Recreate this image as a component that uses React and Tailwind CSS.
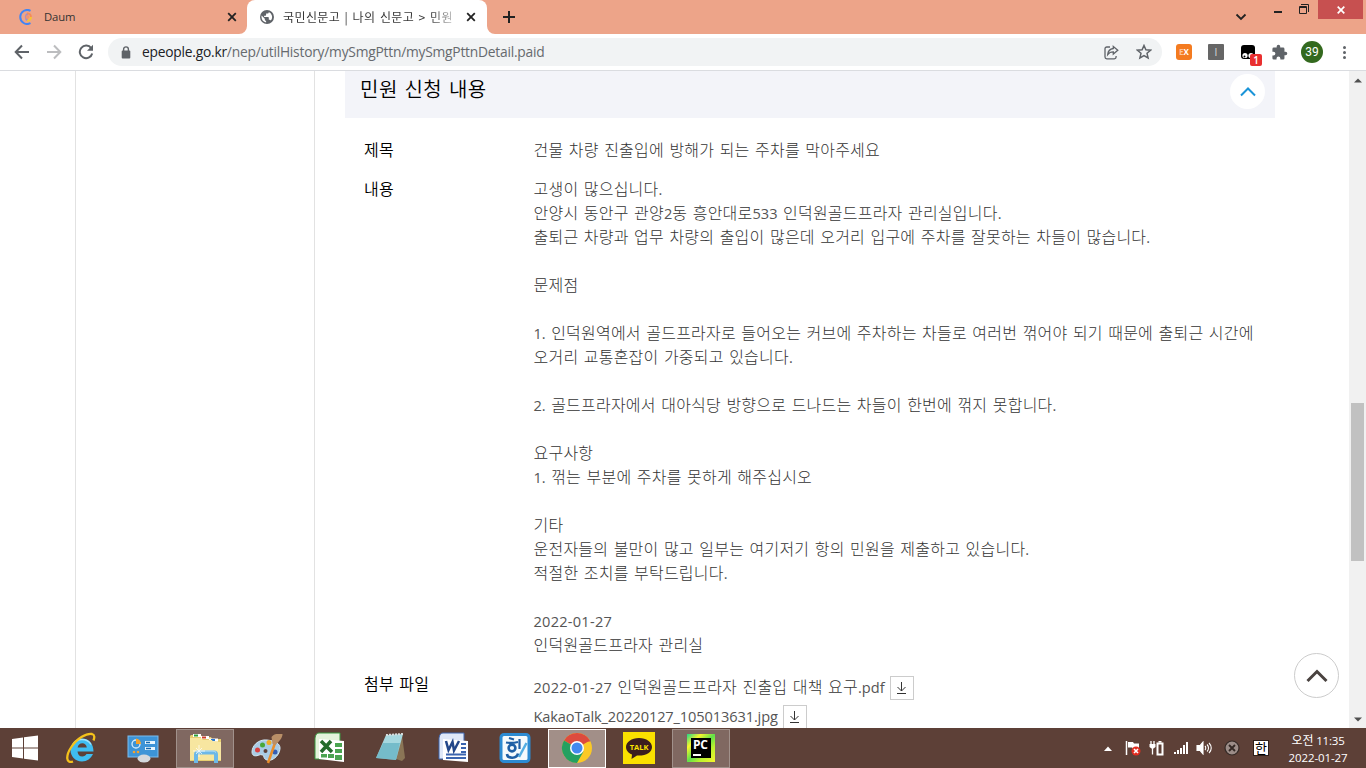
import React from "react";

const KR = "font-['Noto_Sans_CJK_KR',sans-serif]";

function T({ children }) {
  return String(children)
    .split(/([0-9A-Za-z_.\-]+)/)
    .map((part, i) =>
      i % 2 ? (
        <span
          key={i}
          className={
            "font-['Open_Sans','Noto_Sans_CJK_KR',sans-serif] text-[14.6px] leading-none font-normal text-[#555] " +
            (/^[A-Z]/.test(part) ? "tracking-[-0.12px]" : /^\d{4}-/.test(part) ? "tracking-[0.24px]" : "tracking-[0.02px]")
          }
        >
          {part}
        </span>
      ) : (
        part
      )
    );
}

const LINES = [
  "고생이 많으십니다.",
  "안양시 동안구 관양2동 흥안대로533 인덕원골드프라자 관리실입니다.",
  "출퇴근 차량과 업무 차량의 출입이 많은데 오거리 입구에 주차를 잘못하는 차들이 많습니다.",
  "",
  "문제점",
  "",
  "1. 인덕원역에서 골드프라자로 들어오는 커브에 주차하는 차들로 여러번 꺾어야 되기 때문에 출퇴근 시간에",
  "오거리 교통혼잡이 가중되고 있습니다.",
  "",
  "2. 골드프라자에서 대아식당 방향으로 드나드는 차들이 한번에 꺾지 못합니다.",
  "",
  "요구사항",
  "1. 꺾는 부분에 주차를 못하게 해주십시오",
  "",
  "기타",
  "운전자들의 불만이 많고 일부는 여기저기 항의 민원을 제출하고 있습니다.",
  "적절한 조치를 부탁드립니다.",
  "",
  "2022-01-27",
  "인덕원골드프라자 관리실",
];

function CloseX() {
  return (
    <svg width="10" height="10" viewBox="0 0 10 10" className="shrink-0" stroke="#222" strokeWidth="1.8">
      <path d="M1.2 1.2l7.6 7.6M8.8 1.2L1.2 8.8" />
    </svg>
  );
}

function TabStrip() {
  return (
    <div className="flex h-[34px] bg-[#eda489]">
      <div className="flex h-full w-[239px] items-center pl-[18px]">
        <svg width="16" height="16" viewBox="0 0 16 16" fill="none" className="shrink-0">
          <path d="M12.5 1.800A7 7 0 1 0 12.500 14.200" stroke="#4285f4" strokeWidth="2" />
          <path d="M10 4.300A4.200 4.200 0 0 0 10 11.700" stroke="#9b8fd0" strokeWidth="2" />
          <path d="M9 4.300a3.700 3.700 0 0 1 4 3.700" stroke="#f58b57" strokeWidth="1.800" />
          <path d="M13 8a4 4 0 0 1-4 3.700" stroke="#f7c531" strokeWidth="2" />
          <circle cx="9.500" cy="8" r="2" fill="#f0956f" />
        </svg>
        <span className="ml-[10px] w-[183px] font-['Open_Sans',sans-serif] text-[11.3px] leading-4 tracking-[-0.1px] text-[#333]">Daum</span>
        <CloseX />
      </div>
      <svg width="8" height="8" viewBox="0 0 8 8" className="self-end">
        <path d="M8 0v8H0a8 8 0 0 0 8-8z" fill="#fff" />
      </svg>
      <div className="flex h-full w-[240px] items-center rounded-t-lg bg-white pl-[12px]">
        <svg width="16" height="16" viewBox="0 0 16 16" className="shrink-0">
          <circle cx="8" cy="8" r="7" fill="#5f6368" />
          <path d="M2.600 6.500l3.200 3.200v.8c0 .7.600 1.300 1.300 1.300v1.700C4.500 13.100 2.500 10.800 2.500 8c0-.5 0-1 .1-1.500zM9.800 3v.3c0 .7-.6 1.300-1.300 1.300H7.100V6c0 .4-.3.700-.7.700H5.100V8h4c.4 0 .7.300.7.700v2h.7c.6 0 1.100.4 1.300.9A5.500 5.500 0 0 0 9.800 3z" fill="#fff" />
        </svg>
        <div className={`${KR} ml-2 mr-[12px] w-[171px] whitespace-nowrap bg-gradient-to-r from-[#333] from-86% to-[#ccc] bg-clip-text text-[12px] leading-5 tracking-[0.4px] text-transparent [word-spacing:1.3px]`}>
          국민신문고 | 나의 신문고 &gt; 민원
        </div>
        <CloseX />
      </div>
      <svg width="8" height="8" viewBox="0 0 8 8" className="self-end">
        <path d="M0 0v8h8a8 8 0 0 1-8-8z" fill="#fff" />
      </svg>
      <svg width="12" height="12" viewBox="0 0 12 12" className="ml-2 mt-[11px]" stroke="#222" strokeWidth="2">
        <path d="M6 0v12M0 6h12" />
      </svg>
      <div className="flex flex-1 justify-end">
        <svg width="12" height="8" viewBox="0 0 12 8" className="mr-[27px] mt-[13px]" fill="none" stroke="#222" strokeWidth="1.8">
          <path d="M1.5 1.5L6 6l4.500-4.500" />
        </svg>
        <div className="mt-[11px] h-[2px] w-2 bg-[#222]" />
        <svg width="10" height="10" viewBox="0 0 10 10" className="ml-[17px] mt-1" fill="none" stroke="#222">
          <path d="M2 .5h7.500V8" />
          <path d="M.5 2.500h7v7h-7z M.5 3.500h7" />
        </svg>
        <div className="ml-[9px] mr-[3px] flex h-[19px] w-[45px] items-center justify-center bg-[#c75050]">
          <svg width="8" height="8" viewBox="0 0 8 8" stroke="#fff" strokeWidth="1.7">
            <path d="M.7.7l6.600 6.600M7.300.7L.7 7.300" />
          </svg>
        </div>
      </div>
    </div>
  );
}

function Toolbar() {
  return (
    <div className="flex h-[37px] items-center border-b border-[#dadce0] bg-white pl-[14px]">
      <svg width="16" height="16" viewBox="0 0 16 16" fill="none" stroke="#5f6368" strokeWidth="2">
        <path d="M15 8H2M8 1.5L1.7 8 8 14.5" />
      </svg>
      <svg width="16" height="16" viewBox="0 0 16 16" fill="none" stroke="#bcbdbf" strokeWidth="2" className="ml-4">
        <path d="M1 8h13M8 1.5L14.3 8 8 14.5" />
      </svg>
      <svg width="16" height="16" viewBox="0 0 16 16" fill="none" className="ml-4">
        <path d="M13.2 4.2A6.3 6.3 0 1 0 14.2 9.5" stroke="#5f6368" strokeWidth="2" />
        <path d="M15 .8v6H9z" fill="#5f6368" />
      </svg>
      <div className="ml-[14px] flex h-7 w-[1054px] items-center rounded-full bg-[#f1f3f4] pl-[13px] pr-[10px]">
        <svg width="10" height="13" viewBox="0 0 10 13">
          <rect x="0.7" y="4.5" width="8.6" height="8" rx="1" fill="#5f6368" />
          <path d="M2.6 5V3.3a2.400 2.400 0 0 1 4.800 0V5" stroke="#5f6368" strokeWidth="1.4" fill="none" />
        </svg>
        <div className="ml-[11px] flex-1 whitespace-nowrap font-['Open_Sans',sans-serif] text-[13.8px] tracking-[-0.23px] text-[#666a6e]">
          <span className="text-[#202124]">epeople.go.kr</span>/nep/utilHistory/mySmgPttn/mySmgPttnDetail.paid
        </div>
        <svg width="15" height="15" viewBox="0 0 15 15" fill="none" stroke="#5f6368" strokeWidth="1.3">
          <path d="M6 2H2.8A1.8 1.8 0 0 0 1 3.800V12a1.800 1.800 0 0 0 1.800 1.800h7.500A1.800 1.800 0 0 0 12.100 12v-1" />
          <path d="M9.300 1.500L13.800 5.200 9.300 9V6.800C6.800 6.800 5 7.700 3.700 9.500 4 6.200 6 3.900 9.300 3.500z" />
        </svg>
        <svg width="16" height="16" viewBox="0 0 16 16" fill="none" stroke="#5f6368" strokeWidth="1.5" className="ml-[17px]">
          <path d="M8 1.500l1.900 4.300 4.700.4-3.600 3.100 1.100 4.600L8 11.500l-4.100 2.400L5 9.300 1.400 6.200l4.700-.4z" />
        </svg>
      </div>
      <div className="ml-[14px] flex size-4 items-center justify-center rounded-[3px] bg-[#f47b20] font-['Open_Sans',sans-serif] text-[8px] font-bold text-white">
        <span className="text-[#ffc49a]">E</span>X
      </div>
      <div className="ml-4 flex size-4 items-center justify-center rounded-[1px] bg-[#666] font-['Open_Sans',sans-serif] text-[10px] text-[#ddd]">I</div>
      <div className="relative ml-4 size-[22px]">
        <svg width="16" height="16" viewBox="0 0 16 16" className="mt-[3px]">
          <path d="M4 1h8a3 3 0 0 1 3 3v11H4a3 3 0 0 1-3-3V4a3 3 0 0 1 3-3z" fill="#000" />
          <circle cx="5" cy="11.500" r="2.600" fill="#fff" />
          <circle cx="11" cy="11.500" r="2.600" fill="#fff" />
          <circle cx="4.500" cy="12.500" r="1" fill="#000" />
        </svg>
        <div className="absolute left-[10px] top-[13px] flex h-3 w-3 items-center justify-center rounded-[2px] bg-[#e92f2f] font-['Open_Sans',sans-serif] text-[10px] font-semibold text-white">1</div>
      </div>
      <svg width="17" height="17" viewBox="0 0 24 24" className="ml-[9px]" fill="#5f6368">
        <path d="M20.500 11H19V7a2 2 0 0 0-2-2h-4V3.500a2.500 2.500 0 0 0-5 0V5H4a2 2 0 0 0-2 2v3.800h1.500a2.700 2.700 0 0 1 0 5.400H2V20a2 2 0 0 0 2 2h3.800v-1.500a2.700 2.700 0 0 1 5.400 0V22H17a2 2 0 0 0 2-2v-4h1.500a2.500 2.500 0 0 0 0-5z" />
      </svg>
      <div className="ml-[13px] flex size-[22px] items-center justify-center rounded-full bg-[#33691e] font-[Roboto,sans-serif] text-[12px] text-white">39</div>
      <div className="ml-[20px] flex flex-col gap-[2px]">
        <i className="size-[3px] rounded-full bg-[#5f6368]" />
        <i className="size-[3px] rounded-full bg-[#5f6368]" />
        <i className="size-[3px] rounded-full bg-[#5f6368]" />
      </div>
    </div>
  );
}

function Download() {
  return (
    <span className="flex size-6 shrink-0 items-center justify-center border border-[#ccc] bg-white">
      <svg width="12" height="14" viewBox="0 0 12 14" fill="none" stroke="#333">
        <path d="M5.500 1v9M1.500 6l4 4 4-4M1 12.500h9" />
      </svg>
    </span>
  );
}

function FileRow({ name }) {
  return (
    <div className="flex h-6 items-center gap-[5px] whitespace-nowrap">
      <span className="-mt-[5px] h-6"><T>{name}</T></span>
      <Download />
    </div>
  );
}

function Page() {
  return (
    <div className="relative flex h-[657px] overflow-hidden bg-white">
      <div className="w-[76px] shrink-0 border-r border-[#e2e2e2]" />
      <div className="w-[239px] shrink-0 border-r border-[#e2e2e2]" />
      <main className={`${KR} ml-[30px] w-[930px] shrink-0 text-[16px] font-light leading-6 tracking-[0.22px] text-[#333] [word-spacing:1.7px]`}>
        <div className="flex h-[47px] justify-between bg-[#f3f4f9] pl-[15px] pr-[10px]">
          <h2 className="mt-[3px] text-[20px] font-[350] leading-[30px] tracking-[0.5px] text-black">민원 신청 내용</h2>
          <div className="mt-[3px] flex size-[35px] items-center justify-center rounded-full bg-white">
            <svg width="16" height="10" viewBox="0 0 16 10" fill="none" stroke="#1a94d8" strokeWidth="2">
              <path d="M1 8.500l7-7 7 7" />
            </svg>
          </div>
        </div>
        <div className="mt-[19px] flex">
          <div className="w-[188.500px] pl-[19px] font-[350] text-black">제목</div>
          <div>건물 차량 진출입에 방해가 되는 주차를 막아주세요</div>
        </div>
        <div className="mt-[15px] flex">
          <div className="w-[188.500px] pl-[19px] font-[350] text-black">내용</div>
          <div>
            {LINES.map((l, i) => (
              <p key={i} className="h-6 whitespace-nowrap"><T>{l}</T></p>
            ))}
          </div>
        </div>
        <div className="mt-[15px] flex">
          <div className="w-[188.500px] pl-[19px] font-[350] text-black">첨부 파일</div>
          <div className="mt-[5px] flex flex-col gap-[5px]">
            <FileRow name="2022-01-27 인덕원골드프라자 진출입 대책 요구.pdf" />
            <FileRow name="KakaoTalk_20220127_105013631.jpg" />
          </div>
        </div>
      </main>
      <div className="absolute left-[1294px] top-[582px] flex size-[45px] items-center justify-center rounded-full border border-[#ccc] bg-white">
        <svg width="22" height="14" viewBox="0 0 22 14" fill="none" stroke="#4a4340" strokeWidth="3">
          <path d="M1.500 12L11 2.500l9.500 9.500" />
        </svg>
      </div>
      <div className="ml-auto flex w-[17px] flex-col items-center bg-[#f1f1f1]">
        <svg width="8" height="5" viewBox="0 0 8 5" className="mt-[7px]"><path d="M0 4.500L4 .5l4 4z" fill="#505050" /></svg>
        <div className="mt-[320px] h-[158px] w-[13px] bg-[#c1c1c1]" />
        <svg width="8" height="5" viewBox="0 0 8 5" className="mb-[6px] mt-auto"><path d="M0 .5l4 4 4-4z" fill="#505050" /></svg>
      </div>
    </div>
  );
}

function Icon({ children }) {
  return <svg width="32" height="32" viewBox="0 0 32 32">{children}</svg>;
}

const APPS = [
  { id: "ie", art: <Icon>
    <path d="M28 22c-2 4.500-6 7.500-11 7.500C10 29.500 5.500 24 5.500 18S10 6.500 17 6.500 28.500 12 28.500 19.500H12.500c.3 3 2 5 4.800 5 2 0 3.400-1 4.200-2.500zM12.600 15.500h9.200c-.3-2.500-2-4.200-4.500-4.200s-4.300 1.700-4.700 4.200z" fill="#3fbdf1" />
    <path d="M8 13c2-4 6-5.500 9-5.500s7 1.500 9 5" fill="none" stroke="#a3e3fb" strokeWidth="1.500" />
    <path d="M8 29.500C1 32 .5 24 6 15.500 12 6 22 1 27 2c3 .8 2.500 4 1.500 6.500" fill="none" stroke="#f5c21b" strokeWidth="2.300" />
  </Icon> },
  { id: "control", art: <Icon>
    <rect x="1" y="4" width="30" height="21" fill="#3d94d7" stroke="#7dbced" />
    <circle cx="9" cy="12" r="4" fill="none" stroke="#d7eefe" strokeWidth="1.300" />
    <path d="M9 12V6.500a5.500 5.500 0 0 1 5 5.500z" fill="#f5a22c" />
    <path d="M18 10.500h10M18 16.500h10" stroke="#e8f7ff" strokeWidth="3" />
    <path d="M19 10.500h4M19 16.500h5" stroke="#1768ab" strokeWidth="1.500" />
    <circle cx="7" cy="20" r="1.300" fill="#f5a22c" /><circle cx="11" cy="20" r="1.300" fill="#f5a22c" />
    <ellipse cx="17" cy="26.500" rx="6.500" ry="4" fill="#d4d8dc" />
  </Icon> },
  { id: "explorer", state: "open", art: <Icon>
    <path d="M2 3h10l1 2h9l1 2h9v22H1V4z" fill="#e7ce70" />
    <path d="M4 2h8v3H4zM12 4h8v3h-8zM20 6.500h9v3h-9z" fill="#fff" />
    <path d="M5 2.500h4v2H5z" fill="#2b9d38" /><path d="M13 4.500h4v2h-4z" fill="#cf3f2b" /><path d="M22 7h4v2h-4z" fill="#2979d0" />
    <path d="M1 6h11l2 2h9l1 2h8v18H1z" fill="#f7e6a0" />
    <path d="M7 31v-8.500q0-2 2-2h16q2 0 2 2V31" fill="none" stroke="#6db8e8" strokeWidth="4" />
    <path d="M7 20.500q1-1.500 3-1.500h14q2 0 3 1.500" fill="none" stroke="#bfe3f8" />
    <path d="M10 13v12M4 19h12M7 16l6 6M13 16l-6 6" stroke="#fff" opacity=".8" strokeWidth=".9" />
  </Icon> },
  { id: "paint", art: <Icon>
    <path d="M16 8C7 7 1 14 1 20c0 5 5 4 7 3s5 0 5 2 3 4 7 3c6-2 9-8 9-12S25 9 16 8z" fill="#a9cce5" stroke="#d6ecf9" />
    <circle cx="11.500" cy="13" r="2.500" fill="#49a838" /><circle cx="18" cy="10.500" r="2.500" fill="#f1ad25" />
    <circle cx="6.500" cy="18" r="2.500" fill="#d94040" /><circle cx="24" cy="20" r="2.500" fill="#345eb4" />
    <circle cx="14.500" cy="19" r="2" fill="#5d4037" />
    <path d="M17 31l7-20" stroke="#e98e2b" strokeWidth="2.500" />
    <path d="M21.500 12l-1-7c3-4 6-3 11-3 0 4-3 7-7 11z" fill="#b98f67" />
  </Icon> },
  { id: "excel", art: <Icon>
    <path d="M6 1h21v26H2V8C2 4 3 1 6 1z" fill="#e4f3dc" stroke="#3b9942" />
    <path d="M6 7l25 2v21L6 27z" fill="#fff" />
    <path d="M22 11h7v4h-7zM22 17h7v4h-7zM8 22h6v3.500H8zM15 22h6v4h-6zM22 23h7v5h-7z" fill="#4aa451" />
    <path d="M8 9l11 11M18 9L8 20" stroke="#246b2c" strokeWidth="3.500" />
  </Icon> },
  { id: "notepad", art: <Icon>
    <path d="M27 3l3 23-3 3-6-2z" fill="#8a7556" />
    <path d="M11 3l17-1-7 26-20-2z" fill="#a6d8df" />
    <path d="M8 11l17 0-4 17-20-2z" fill="#5aaebf" opacity=".65" />
    <path d="M11 3l17-1" stroke="#d7dddd" strokeWidth="2" strokeDasharray="2 1" />
  </Icon> },
  { id: "word", art: <Icon>
    <path d="M6 1h21v26H2V8C2 4 3 1 6 1z" fill="#dfe8f8" stroke="#3d65ae" />
    <path d="M6 7l25 2v21L6 28z" fill="#fff" />
    <path d="M24 12h5M24 16h5M24 20h5M9 22.500h20M9 26h20" stroke="#3b65af" strokeWidth="2" />
    <path d="M9 9l2.500 9 4-8 1.500 8.500L22 9" stroke="#234789" strokeWidth="2.500" fill="none" />
  </Icon> },
  { id: "hangul", art: <Icon>
    <rect x="2" y="2.500" width="28" height="27" rx="3" fill="#f5fafd" stroke="#2c8bd3" strokeWidth="3" />
    <path d="M10 6l5 1.500M7 10.500c4 .8 8 .5 12-.5" stroke="#1e5fa5" strokeWidth="2.200" fill="none" />
    <circle cx="13" cy="16" r="3.400" fill="none" stroke="#1e5fa5" strokeWidth="2.600" />
    <path d="M8 22c.5 5 10 5 11-.5" stroke="#1e5fa5" strokeWidth="2.600" fill="none" />
    <path d="M20.500 7v10" stroke="#1e5fa5" strokeWidth="2.200" />
    <path d="M20 25L27.500 11" stroke="#54aee3" strokeWidth="2.500" />
  </Icon> },
  { id: "chrome", state: "active", art: <Icon>
    <circle cx="16" cy="16" r="15" fill="#fbc926" />
    <path d="M16 16L3 8.500a15 15 0 0 1 26 0z" fill="#dd4b3e" />
    <path d="M3 8.500a15 15 0 0 0 13 22.500l6.500-11.500L16 16z" fill="#24a061" />
    <path d="M16 9h13.200" stroke="#dd4b3e" strokeWidth="1" />
    <circle cx="16" cy="16" r="7" fill="#fff" /><circle cx="16" cy="16" r="5.500" fill="#4389ef" />
  </Icon> },
  { id: "talk", art: (
    <div className="relative flex size-8 items-center justify-center bg-[#fae100]">
      <svg width="28" height="26" viewBox="0 0 28 26"><path d="M14 3C6.500 3 1 7 1 12c0 3.500 2.500 6 6 7.500L6.500 24l5.500-3.500c9 .5 15-3 15-8.500 0-5-5.500-9-13-9z" fill="#3c1e1e" /></svg>
      <span className="absolute top-[9px] font-['Open_Sans',sans-serif] text-[7.500px] font-bold leading-[12px] text-[#fae100]">TALK</span>
    </div>
  ) },
  { id: "pycharm", state: "open", art: (
    <div className="flex size-7 items-center justify-center bg-[linear-gradient(135deg,#21d789_0%,#f8f52b_25%,#5fe04a_50%,#b9f22d_70%,#f8f52b_100%)]">
      <div className="flex h-[20px] w-[20px] flex-col items-start bg-black pl-[2px]">
        <span className="font-['Open_Sans',sans-serif] text-[12px] font-bold leading-[13px] tracking-[-0.2px] text-white">PC</span>
        <span className="mt-[3px] h-[1.500px] w-2 bg-white" />
      </div>
    </div>
  ) },
];

function Taskbar() {
  return (
    <div className="flex h-10 items-center bg-[#5d4037]">
      <svg width="28" height="26" viewBox="0 0 28 26" fill="#fff" className="ml-[11px] mr-[13px]">
        <path d="M1 4l11-1.500v10H1zM13 2.300L27 .5v12H13zM1 13.500h11v10L1 22zM13 13.500h14v12l-14-1.800z" />
      </svg>
      <div className="flex gap-1">
        {APPS.map((a) => (
          <div
            key={a.id}
            className={
              "flex h-[39px] w-[58px] items-center justify-center border " +
              (a.state === "active" ? "border-white bg-[#a28f88]" : a.state === "open" ? "border-[#a1918b] bg-[#806861]" : "border-transparent")
            }
          >
            {a.art}
          </div>
        ))}
      </div>
      <div className="ml-auto flex items-center">
        <svg width="8" height="5" viewBox="0 0 8 5"><path d="M0 5l4-4.500L8 5z" fill="#fff" /></svg>
        <svg width="16" height="16" viewBox="0 0 16 16" className="ml-[13px]">
          <path d="M1.500 1v14" stroke="#fff" strokeWidth="1.500" />
          <path d="M3 2h5l1 1.500h5V9H8L7 7.500H3z" fill="#fff" />
          <circle cx="11" cy="11" r="4.500" fill="#e32d20" />
          <path d="M9 9l4 4M13 9l-4 4" stroke="#fff" strokeWidth="1.600" />
        </svg>
        <svg width="16" height="16" viewBox="0 0 16 16" className="ml-2" fill="none" stroke="#fff">
          <path d="M2 1v3M5 1v3M3.500 7v7.500" strokeWidth="1.300" /><path d="M.5 4h6v3L4.500 8.500h-2L.5 7z" fill="#fff" stroke="none" />
          <path d="M8.500 3.500h5v11h-5z" strokeWidth="2" /><path d="M9.500 1.800h3" strokeWidth="1.600" />
        </svg>
        <svg width="16" height="14" viewBox="0 0 16 14" className="ml-2" fill="#fff">
          <path d="M1 11h2v2H1zM4 9h2v4H4zM7 7h2v6H7zM10 4h2v9h-2zM13 1h2v12h-2z" />
        </svg>
        <svg width="16" height="14" viewBox="0 0 16 14" className="ml-[7px]" fill="none" stroke="#fff" strokeWidth="1.100">
          <path d="M1 4.500h3L7 1v12L4 9.500H1z" fill="#fff" /><path d="M9 5c1 1 1 3 0 4M11 3.500c2 2 2 5 0 7M13 2c3 3 3 7 0 10" />
        </svg>
        <svg width="16" height="16" viewBox="0 0 16 16" className="ml-[12px]">
          <circle cx="8" cy="8" r="7" fill="#9c8d88" stroke="#342925" strokeWidth="1.200" />
          <path d="M5 5l6 6M11 5l-6 6" stroke="#342925" strokeWidth="1.900" />
        </svg>
        <div className={`${KR} ml-[13px] flex size-[16px] items-center justify-center border border-[#2e201b] bg-white text-[13px] font-normal leading-[14px] text-black`}>한</div>
        <div className="ml-[12px] mr-[11px] w-[74px] text-center text-[12px] leading-[17px] text-white">
          <div className={KR}>오전 <span className="font-['Open_Sans',sans-serif] text-[11.500px] tracking-[-0.2px]">11:35</span></div>
          <div className="font-['Open_Sans',sans-serif] text-[11.500px] tracking-[-0.1px]">2022-01-27</div>
        </div>
      </div>
    </div>
  );
}

export default function App() {
  return (
    <div className="flex h-[768px] w-[1366px] flex-col overflow-hidden">
      <TabStrip />
      <Toolbar />
      <Page />
      <Taskbar />
    </div>
  );
}
